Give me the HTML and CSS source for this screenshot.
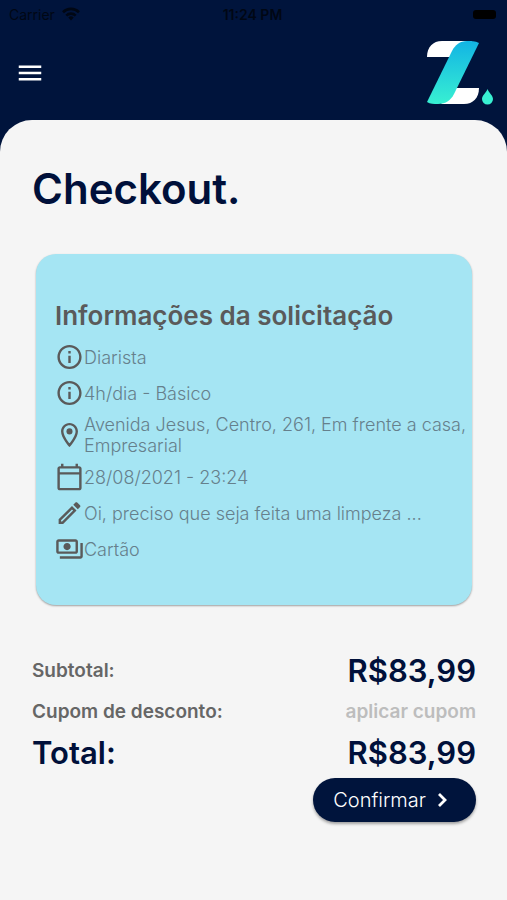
FILE: index.html
```html
<!DOCTYPE html>
<html lang="pt-BR">
<head>
<meta charset="utf-8">
<meta name="viewport" content="width=device-width, initial-scale=1">
<title>Checkout</title>
<link rel="stylesheet" href="styles.css">
</head>
<body>
<div class="status">
  <div class="carrier">
    <span>Carrier</span>
    <svg width="18" height="14" viewBox="0 0 18 14" aria-hidden="true"><g fill="none" stroke="currentColor" stroke-width="2.6"><path d="M1 5.2a11.4 11.4 0 0 1 16 0"/><path d="M4.3 8.6a6.7 6.7 0 0 1 9.4 0"/></g><path d="M6.3 10.6a3.9 3.9 0 0 1 5.4 0L9 13.4z" fill="currentColor"/></svg>
  </div>
  <span class="clock">11:24 PM</span>
  <div class="power"><span class="battery"></span></div>
</div>
<header class="topbar">
  <button class="menu" type="button" aria-label="Menu">
    <svg width="30" height="30" viewBox="0 0 24 24" fill="currentColor"><path d="M3 18h18v-2H3v2zm0-5h18v-2H3v2zm0-7v2h18V6H3z"/></svg>
  </button>
  <svg class="logo" width="68" height="66" viewBox="0 0 68 66" aria-hidden="true">
    <defs><linearGradient id="stripe" x1="0" y1="0" x2="0" y2="1"><stop offset="0" stop-color="#12b4e4"/><stop offset="1" stop-color="#38f0d2"/></linearGradient></defs>
    <path d="M1 17C1 7 7 1 16 1h30L32 17z" fill="#fff"/>
    <path d="M53 48c0 10-6 16-15 16H15l11-16z" fill="#fff"/>
    <path d="M53 3C49 1 45 1 41 1c-7 0-12 4-15 10L1 62c3 2 7 2 11 2 8 0 13-4 16-10z" fill="url(#stripe)"/>
    <path d="M61.500 49c1.500 4 5.500 6.500 5.500 10a5.500 5.500 0 0 1-11 0c0-3.500 4-6 5.500-10z" fill="#38f0d2"/>
  </svg>
</header>
<main class="sheet">
  <h1>Checkout.</h1>
  <section class="card">
    <h2>Informações da solicitação</h2>
    <ul class="details">
      <li><svg class="icon" viewBox="0 0 24 24"><path d="M11 7h2v2h-2zm0 4h2v6h-2zm1-9C6.480 2 2 6.480 2 12s4.480 10 10 10 10-4.480 10-10S17.520 2 12 2zm0 18c-4.410 0-8-3.590-8-8s3.590-8 8-8 8 3.590 8 8-3.590 8-8 8z"/></svg><span>Diarista</span></li>
      <li><svg class="icon" viewBox="0 0 24 24"><path d="M11 7h2v2h-2zm0 4h2v6h-2zm1-9C6.480 2 2 6.480 2 12s4.480 10 10 10 10-4.480 10-10S17.520 2 12 2zm0 18c-4.410 0-8-3.590-8-8s3.590-8 8-8 8 3.590 8 8-3.590 8-8 8z"/></svg><span>4h/dia - Básico</span></li>
      <li><svg class="icon" viewBox="0 0 24 24"><path d="M12 2C8.130 2 5 5.130 5 9c0 5.250 7 13 7 13s7-7.750 7-13c0-3.870-3.130-7-7-7zM7 9c0-2.760 2.240-5 5-5s5 2.240 5 5c0 2.880-2.880 7.190-5 9.880C9.920 16.210 7 11.850 7 9z"/><circle cx="12" cy="9" r="2.500"/></svg><span>Avenida Jesus, Centro, 261, Em frente a casa, Empresarial</span></li>
      <li><svg class="icon" viewBox="0 0 24 24"><path d="M20 3h-1V1h-2v2H7V1H5v2H4c-1.100 0-2 .9-2 2v16c0 1.100.9 2 2 2h16c1.100 0 2-.9 2-2V5c0-1.100-.9-2-2-2zm0 18H4V10h16v11zm0-13H4V5h16v3z"/></svg><span>28/08/2021 - 23:24</span></li>
      <li><svg class="icon" viewBox="0 0 24 24"><path d="M14.060 9.020l.92.920L5.920 19H5v-.92l9.060-9.060M17.660 3c-.25 0-.51.1-.7.290l-1.830 1.830 3.750 3.750 1.830-1.830c.39-.39.39-1.020 0-1.410l-2.340-2.340c-.2-.2-.45-.29-.71-.29zm-3.600 3.190L3 17.250V21h3.750L17.810 9.940l-3.750-3.750z"/></svg><span>Oi, preciso que seja feita uma limpeza ...</span></li>
      <li><svg class="icon" viewBox="0 0 24 24"><path d="M19 14V6c0-1.100-.9-2-2-2H3c-1.100 0-2 .9-2 2v8c0 1.100.9 2 2 2h14c1.100 0 2-.9 2-2zm-2 0H3V6h14v8zm-7-7c-1.660 0-3 1.340-3 3s1.340 3 3 3 3-1.340 3-3-1.340-3-3-3zm13 0v11c0 1.100-.9 2-2 2H4v-2h17V7h2z"/></svg><span>Cartão</span></li>
    </ul>
  </section>
  <dl class="totals">
    <div class="line"><dt>Subtotal:</dt><dd class="amount">R$83,99</dd></div>
    <div class="line"><dt>Cupom de desconto:</dt><dd><button class="coupon" type="button">aplicar cupom</button></dd></div>
    <div class="line total"><dt>Total:</dt><dd class="amount">R$83,99</dd></div>
  </dl>
  <button class="confirm" type="button">
    <span>Confirmar</span>
    <svg width="24" height="24" viewBox="0 0 24 24" fill="none" stroke="currentColor" stroke-width="2.800"><path d="M9 6l6 6-6 6"/></svg>
  </button>
</main>
</body>
</html>
```
FILE: styles.css
```css
* {
  box-sizing: border-box;
}

body {
  margin: 0;
  min-height: 100vh;
  display: flex;
  flex-direction: column;
  background: #00143c;
  color: #00103a;
  font-family: Inter, "Liberation Sans", sans-serif;
}

h1, h2, ul, dl, dd {
  margin: 0;
  padding: 0;
}

button {
  border: 0;
  padding: 0;
  background: none;
  color: inherit;
  font: inherit;
  cursor: pointer;
}

svg {
  display: block;
  flex: none;
}

.status {
  display: grid;
  grid-template-columns: 1fr auto 1fr;
  align-items: center;
  height: 28px;
  padding: 0 11px 0 9px;
  color: #000714;
  font-size: 14px;
}

.carrier {
  display: flex;
  align-items: center;
  gap: 7px;
}

.clock {
  font-weight: 600;
}

.power {
  display: flex;
  justify-content: flex-end;
}

.battery {
  width: 23px;
  height: 9px;
  border-radius: 3px;
  background: #000;
}

.topbar {
  display: flex;
  align-items: center;
  justify-content: space-between;
  height: 92px;
  padding: 0 13px 2px 15px;
  color: #fff;
}

.sheet {
  flex: 1;
  display: flex;
  flex-direction: column;
  padding: 45px 31px 24px 32px;
  border-radius: 32px 32px 0 0;
  background: #f5f5f5;
}

h1 {
  font-size: 42px;
  font-weight: 600;
  line-height: 48px;
}

.card {
  margin: 41px 4px 0;
  padding: 46px 0 41px 19px;
  border-radius: 20px;
  background: #a5e5f3;
  box-shadow: 0 1px 2px rgba(0, 0, 0, 0.35);
  color: #5a5a5a;
}

h2 {
  font-size: 26px;
  font-weight: 600;
  line-height: 32px;
}

.details {
  display: flex;
  flex-direction: column;
  gap: 6px;
  margin-top: 10px;
  list-style: none;
}

.details li {
  display: flex;
  align-items: center;
  color: #66808c;
  font-size: 18px;
  font-weight: 300;
  line-height: 21px;
}

.icon {
  width: 29px;
  height: 30px;
  fill: #5a5a5a;
}

.totals {
  margin-top: 45px;
  color: #666;
  font-size: 19px;
  font-weight: 600;
}

.line {
  display: flex;
  align-items: center;
  justify-content: space-between;
  height: 41px;
}

.amount, .total {
  color: #00103a;
  font-size: 31px;
}

.coupon {
  color: #bdbdbd;
}

.confirm {
  align-self: flex-end;
  display: flex;
  align-items: center;
  gap: 4px;
  height: 44px;
  margin-top: 5px;
  padding: 0 22px 0 20px;
  border-radius: 22px;
  background: #00143c;
  box-shadow: 0 2px 3px rgba(0, 0, 0, 0.35);
  color: #fff;
  font-size: 20px;
  font-weight: 300;
}
```
